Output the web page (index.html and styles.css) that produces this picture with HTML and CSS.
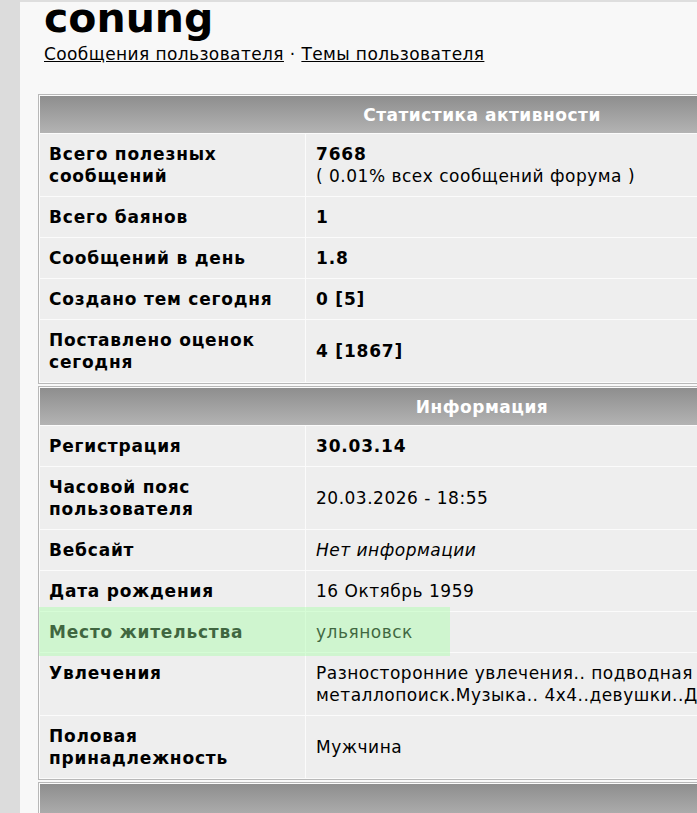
FILE: index.html
```html
<!DOCTYPE html>
<html lang="ru">

<head>
    <meta charset="UTF-8">
    <title>Профиль пользователя conung</title>
    <link rel="stylesheet" href="styles.css">
</head>

<body>
    <div class="page">
        <div class="sidebar"></div>
        <div class="content">
            <div class="profile-head">
                <h1>conung</h1>
                <div class="profile-links">
                    <a href="#">Сообщения пользователя</a> &middot; <a href="#">Темы пользователя</a>
                </div>
            </div>

            <table class="stats">
                <tr>
                    <th colspan="2">Статистика активности</th>
                </tr>
                <tr>
                    <td class="label">Всего полезных сообщений</td>
                    <td><b>7668</b><br>( 0.01% всех сообщений форума )</td>
                </tr>
                <tr>
                    <td class="label">Всего баянов</td>
                    <td><b>1</b></td>
                </tr>
                <tr>
                    <td class="label">Сообщений в день</td>
                    <td><b>1.8</b></td>
                </tr>
                <tr>
                    <td class="label">Создано тем сегодня</td>
                    <td><b>0 [5]</b></td>
                </tr>
                <tr>
                    <td class="label">Поставлено оценок сегодня</td>
                    <td><b>4 [1867]</b></td>
                </tr>
            </table>

            <table class="stats">
                <tr>
                    <th colspan="2">Информация</th>
                </tr>
                <tr>
                    <td class="label">Регистрация</td>
                    <td><b>30.03.14</b></td>
                </tr>
                <tr>
                    <td class="label">Часовой пояс пользователя</td>
                    <td>20.03.2026 - 18:55</td>
                </tr>
                <tr>
                    <td class="label">Вебсайт</td>
                    <td><i>Нет информации</i></td>
                </tr>
                <tr>
                    <td class="label">Дата рождения</td>
                    <td>16 Октябрь 1959</td>
                </tr>
                <tr class="found">
                    <td class="label">Место жительства</td>
                    <td>ульяновск<span class="found-mark"></span></td>
                </tr>
                <tr>
                    <td class="label">Увлечения</td>
                    <td>Разносторонние увлечения.. подводная охота.. рыбалка..<br>металлопоиск.Музыка.. 4x4..девушки..Друзья..</td>
                </tr>
                <tr>
                    <td class="label">Половая принадлежность</td>
                    <td>Мужчина</td>
                </tr>
            </table>

            <table class="stats">
                <tr>
                    <th colspan="2">&nbsp;</th>
                </tr>
                <tr>
                    <td class="label">Подпись</td>
                    <td>&nbsp;</td>
                </tr>
            </table>
        </div>
    </div>
</body>

</html>
```

FILE: styles.css
```css
body {
    margin: 0;
    font-family: "DejaVu Sans", Verdana, sans-serif;
    font-size: 17px;
    letter-spacing: 0.5px;
    color: #000;
    background-color: #f8f8f8;
}
.page {
    display: flex;
    min-height: 100vh;
}
.sidebar {
    flex: 0 0 20px;
    background-color: #dcdcdc;
}
.content {
    flex: 1;
    padding: 0 0 0 18px;
    border-top: 2px solid #dedede;
    overflow: hidden;
}
.profile-head {
    padding-left: 6px;
}
h1 {
    margin: -7px 0 0 0;
    font-size: 41px;
    line-height: 46px;
    font-weight: bold;
    letter-spacing: 0;
}
.profile-links {
    margin-top: 3px;
    font-size: 17px;
    letter-spacing: 0.4px;
    line-height: 20px;
}
.profile-links a {
    color: #000;
    text-decoration: underline;
}
.stats {
    width: 888px;
    margin-top: 30px;
    border: 1px solid #b8b8b8;
    border-spacing: 1px;
    background-color: #fbfbfb;
}
.stats + .stats {
    margin-top: 2px;
}
.stats th {
    height: 37px;
    padding: 0;
    color: #fff;
    font-size: 17px;
    font-weight: bold;
    text-align: center;
    background: linear-gradient(#8e8e8e, #b3b3b3);
}
.stats td {
    padding: 9px 10px;
    line-height: 22px;
    background-color: #eeeeee;
    vertical-align: middle;
}
.stats td.label {
    width: 246px;
    padding-left: 9px;
    font-weight: bold;
    letter-spacing: 0.8px;
    vertical-align: top;
}
.stats b {
    letter-spacing: 0.8px;
}
.found td:last-child {
    position: relative;
}
/* подсветка найденной строки поверх ячеек */
.found-mark {
    position: absolute;
    top: -5px;
    bottom: -4px;
    left: -267px;
    width: 411px;
    background-color: rgba(160, 255, 160, 0.4);
}
```
